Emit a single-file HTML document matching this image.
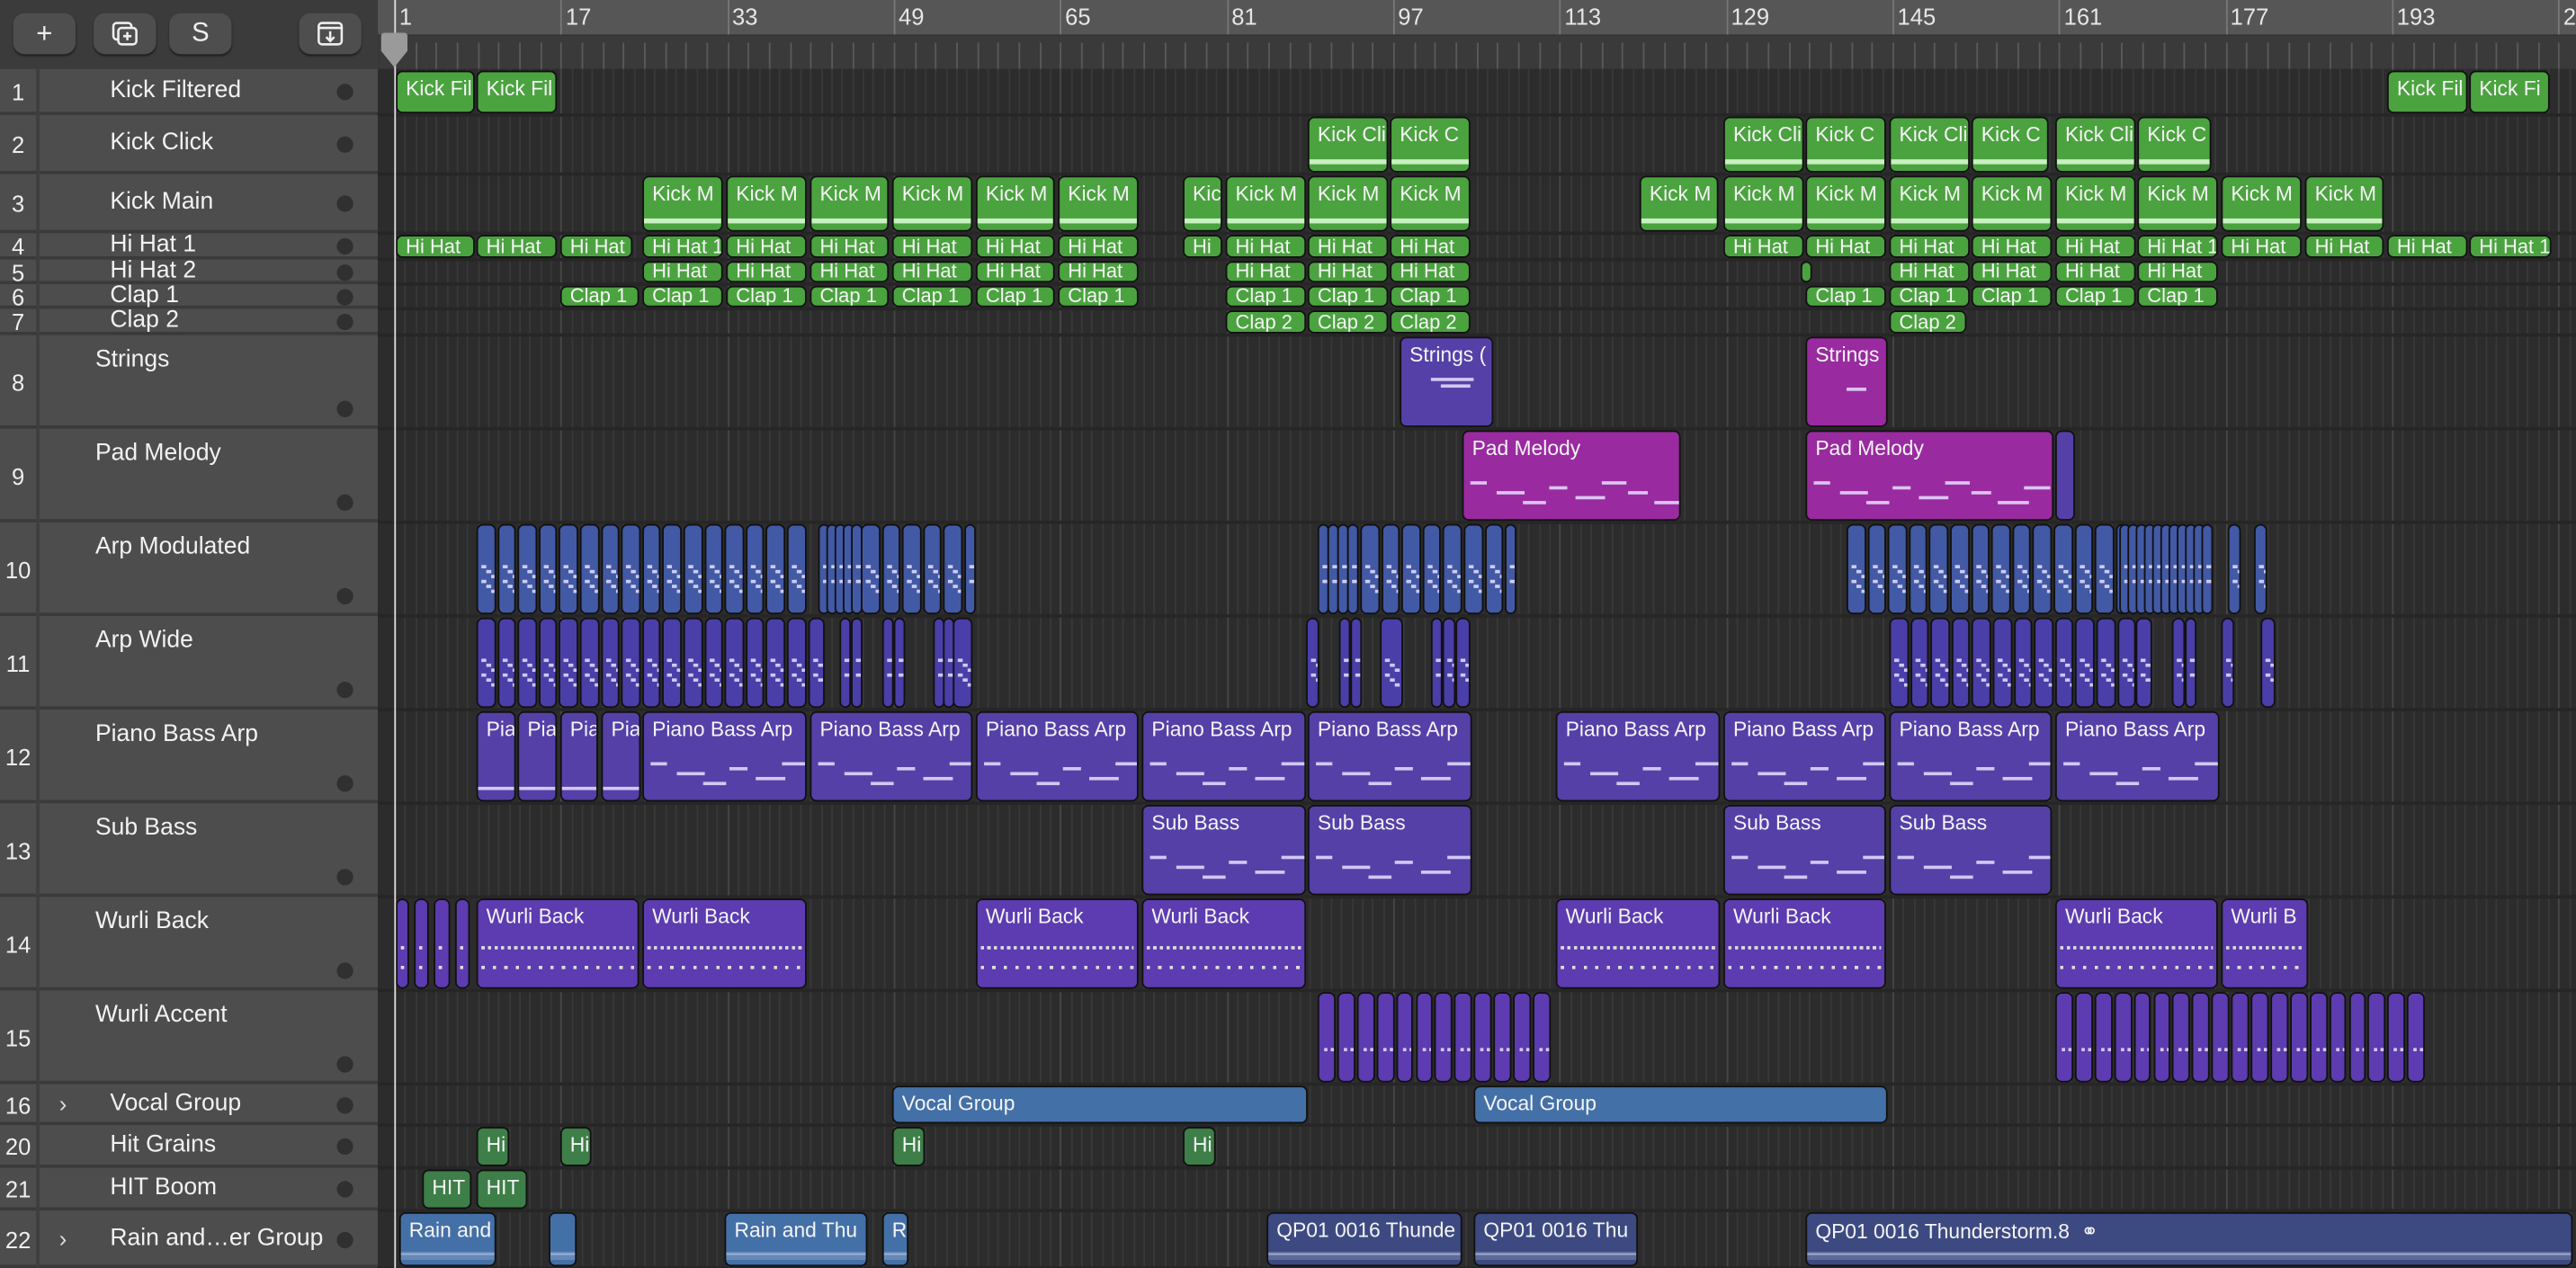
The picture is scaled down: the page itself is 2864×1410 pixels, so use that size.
<!DOCTYPE html>
<html><head><meta charset="utf-8">
<style>
html,body{margin:0;padding:0;background:#2b2b2b;overflow:hidden;width:2864px;height:1410px}
#app{position:absolute;left:0;top:0;width:1568px;height:772px;transform:scale(1.826531);transform-origin:0 0;font-family:"Liberation Sans",Arial,sans-serif;color:#fff;overflow:hidden}
#hdr{position:absolute;left:0;top:0;width:230px;height:42px;background:#3b3b3b;border-bottom:1px solid #2a2a2a}
.btn{position:absolute;top:8px;height:25px;width:38px;background:#4e4e4e;border-radius:7px;box-shadow:0 1px 1px #222;color:#eee;font-size:17px;text-align:center;line-height:25px}
#list{position:absolute;left:0;top:42px;width:230px;height:730px;background:#4d4d4d}
.row{position:absolute;left:0;width:230px;border-bottom:2px solid #3a3a3a;box-sizing:border-box}
.num{position:absolute;left:0;width:22px;text-align:center;font-size:14px;color:#eee}
.ncol{position:absolute;left:22px;top:0;bottom:0;width:2px;background:#3e3e3e}
.nm{position:absolute;font-size:14.5px;color:#f2f2f2;white-space:nowrap}
.dot{position:absolute;left:205px;width:10px;height:10px;border-radius:50%;background:#303030}
.exp{position:absolute;left:36px;font-size:14px;color:#ddd}
#ruler{position:absolute;left:230px;top:0;width:1338px;height:42px;background:#3a3a3a}
#r1{position:absolute;left:0;top:0;width:1338px;height:21px;background:#565656;border-bottom:1px solid #333}
.bn{position:absolute;top:2px;font-size:14px;color:#e6e6e6}
.bl{position:absolute;top:0;width:1px;height:21px;background:#777}
#arr{position:absolute;left:230px;top:42px;width:1338px;height:730px;background:#2c2c2c}
.hl{position:absolute;left:0;width:1338px;height:2px;background:#262626}
.vl{position:absolute;top:0;width:1px;height:730px;background:#3b3b3b}
.rg{position:absolute;box-sizing:border-box;border:1px solid #111;border-radius:4px;overflow:hidden;font-size:12.5px;white-space:nowrap;color:#f4f4f4;padding:3px 0 0 5px}
.g{background:#4ba33f}.dg{background:#3e7e48}.b1{background:#4259a5}.b2{background:#4a3ea8}.p{background:#5540a8}.m{background:#9a2aa0}.w{background:#5c3cb0}.v{background:#4470a8}.n{background:#3d4a82}
.ln{position:absolute;height:2px;background:rgba(230,225,255,.85)}
</style></head><body><div id="app">
<div id="hdr">
<div class="btn" style="left:8px">+</div>
<div class="btn" style="left:57px"><svg width="20" height="18" viewBox="0 0 20 18" style="margin-top:4px"><rect x="3" y="2" width="11" height="10" rx="2" fill="none" stroke="#eee" stroke-width="1.4"/><rect x="6" y="5" width="11" height="10" rx="2" fill="#4e4e4e" stroke="#eee" stroke-width="1.4"/><path d="M11.5 7.5v5M9 10h5" stroke="#eee" stroke-width="1.4"/></svg></div>
<div class="btn" style="left:103px;font-size:16px">S</div>
<div class="btn" style="left:182px"><svg width="18" height="18" viewBox="0 0 18 18" style="margin-top:4px"><rect x="2" y="2" width="14" height="13" rx="2" fill="none" stroke="#eee" stroke-width="1.4"/><path d="M2 5h14M9 7v6M6.5 10.5L9 13l2.5-2.5" fill="none" stroke="#eee" stroke-width="1.4"/></svg></div>
</div>
<div id="list"></div>
<div id="ruler"><div id="r1"></div></div>
<div id="arr"></div>
<div style="position:absolute;left:239.5px;top:0;width:1px;height:772px;background:#ddd"></div>
<svg style="position:absolute;left:231px;top:20px" width="18" height="22"><path d="M1 2Q1 0 3 0H15Q17 0 17 2V11L9 21L1 11Z" fill="#9a9a9a"/></svg>
</div>
<script>
(function(){
var L=document.getElementById('list'),A=document.getElementById('arr'),R=document.getElementById('ruler'),R1=document.getElementById('r1');
var rows=[[1,'Kick Filtered',42,70,0],[2,'Kick Click',70,106,0],[3,'Kick Main',106,142,0],[4,'Hi Hat 1',142,158,0],[5,'Hi Hat 2',158,173,0],[6,'Clap 1',173,188,0],[7,'Clap 2',188,204,0],[8,'Strings',204,261,1],[9,'Pad Melody',261,318,1],[10,'Arp Modulated',318,375,1],[11,'Arp Wide',375,432,1],[12,'Piano Bass Arp',432,489,1],[13,'Sub Bass',489,546,1],[14,'Wurli Back',546,603,1],[15,'Wurli Accent',603,660,1],[16,'Vocal Group',660,685,2],[20,'Hit Grains',685,711,0],[21,'HIT Boom',711,737,0],[22,'Rain and…er Group',737,772,2]];
var h='';var ah='';
rows.forEach(function(r){var t=r[2]-42,hh=r[3]-r[2],c=t+hh/2;
h+='<div class="row" style="top:'+t+'px;height:'+hh+'px"></div>';
if(r[4]==1){h+='<div class="num" style="top:'+(c-8)+'px">'+r[0]+'</div><div class="nm" style="left:58px;top:'+(t+7)+'px">'+r[1]+'</div><div class="dot" style="top:'+(t+hh-17)+'px"></div>';}
else{h+='<div class="num" style="top:'+(c-8)+'px">'+r[0]+'</div><div class="nm" style="left:67px;top:'+(c-9)+'px">'+r[1]+'</div><div class="dot" style="top:'+(c-5)+'px"></div>';
if(r[4]==2)h+='<div class="exp" style="top:'+(c-9)+'px">&#x203A;</div>';}
ah+='<div class="hl" style="top:'+(r[3]-43)+'px"></div>';});
h+='<div class="ncol"></div>';L.innerHTML=h;
var bw=6.333,x0=10;var vl='';
for(var b=0;b<212;b++){vl+='<div class="vl" style="left:'+(x0+b*bw)+'px;background:'+(b%16==0?'#474747':'#383838')+'"></div>';}
var rh='';for(var b=0;b<212;b+=2){rh+='<div style="position:absolute;left:'+(x0+b*bw)+'px;top:26px;width:1px;height:16px;background:#5a5a5a"></div>';}
var lb='';for(var n=1;n<=209;n+=16){var x=x0+(n-1)*bw;lb+='<div class="bl" style="left:'+x+'px"></div><div class="bn" style="left:'+(x+3)+'px">'+n+'</div>';}
R1.innerHTML=lb;R.insertAdjacentHTML('beforeend',rh);
function getRow(t){for(var i=0;i<rows.length;i++)if(rows[i][0]==t)return rows[i];}
var out='';
function rg(t,a,b,txt,cls,notes){var r=getRow(t);var y=r[2]-42+1,hh=r[3]-r[2]-2;
var s='<div class="rg '+cls+'" style="left:'+(a-230)+'px;top:'+y+'px;width:'+(b-a)+'px;height:'+hh+'px'+(hh<18?';font-size:12px;padding-top:0;line-height:'+(hh-2)+'px':'')+'">'+(txt||'');
if(notes)s+=notes(b-a,hh);s+='</div>';out+=s;}
function seq(t,list,txt,cls,notes){list.forEach(function(p){rg(t,p[0],p[1],p[2]!==undefined?p[2]:txt,cls,notes);});}
function split(a,b,w){var l=[];for(var x=a;x<b-1;x+=w)l.push([x,Math.min(x+w-1,b)]);return l;}
var kick=function(w,h){return '<div class="ln" style="left:0;right:0;top:'+(h-9)+'px;background:#c8f0c0;height:3px"></div>';};
var arp=function(w,h){var s='';for(var i=0;i<6;i++)s+='<div class="ln" style="left:'+(2+(i%3)*3)+'px;width:3px;top:'+(h/2-4+i*3)+'px"></div>';return s;};
var mel=function(w,h){var s='';for(var i=0;i<Math.max(2,w/18);i++)s+='<div class="ln" style="left:'+(4+i*16)+'px;width:'+(10+(i*7)%10)+'px;top:'+(h*0.55+((i*37)%5)*3)+'px"></div>';return s;};
var wur=function(w,h){var s='<div class="ln" style="left:2px;right:2px;top:'+(h*0.5)+'px;background:repeating-linear-gradient(90deg,#ddd 0 2px,transparent 2px 4px)"></div>';s+='<div class="ln" style="left:2px;right:2px;top:'+(h*0.72)+'px;background:repeating-linear-gradient(90deg,#ddd 0 2px,transparent 2px 7px)"></div>';return s;};
var pia=function(w,h){return '<div class="ln" style="left:0;right:0;top:'+(h-10)+'px"></div>';};
seq(1,[[241,289],[290,339],[1453,1502],[1503,1552,'Kick Fi']],'Kick Fil','g');
seq(2,[[796,845,'Kick Cli'],[846,895],[1049,1098,'Kick Cli'],[1099,1148],[1150,1199,'Kick Cli'],[1200,1247],[1251,1300,'Kick Cli'],[1301,1346]],'Kick C','g',kick);
seq(3,[[391,440],[442,491],[493,541],[543,592],[594,642],[644,693],[720,744,'Kic'],[746,795],[796,845],[846,895],[998,1046],[1049,1098],[1099,1148],[1150,1199],[1200,1249],[1251,1300],[1301,1350],[1352,1401],[1403,1451]],'Kick M','g',kick);
seq(4,[[241,289],[290,339],[341,385],[391,440,'Hi Hat 1'],[442,491],[493,541],[543,592],[594,642],[644,693],[720,744,'Hi'],[746,795],[796,845],[846,895],[1049,1098],[1099,1148],[1150,1199],[1200,1249],[1251,1300],[1301,1350,'Hi Hat 1'],[1352,1401],[1403,1451],[1453,1502],[1503,1553,'Hi Hat 1']],'Hi Hat','g');
seq(5,[[391,440],[442,491],[493,541],[543,592],[594,642],[644,693],[746,795],[796,845],[846,895],[1096,1103,''],[1150,1199],[1200,1249],[1251,1300],[1301,1350]],'Hi Hat','g');
seq(6,[[341,389],[391,440],[442,491],[493,541],[543,592],[594,642],[644,693],[746,795],[796,845],[846,895],[1099,1148],[1150,1199],[1200,1249],[1251,1300],[1301,1350]],'Clap 1','g');
seq(7,[[746,795],[796,845],[846,895],[1150,1197]],'Clap 2','g');
rg(8,852,909,'Strings (','p',function(w,h){return '<div class="ln" style="left:18px;width:26px;top:24px"></div><div class="ln" style="left:24px;width:18px;top:28px"></div>';});
rg(8,1099,1149,'Strings','m',function(){return '<div class="ln" style="left:24px;width:12px;top:30px"></div>';});
rg(9,890,1023,'Pad Melody','m',mel);rg(9,1099,1250,'Pad Melody','m',mel);rg(9,1251,1263,'','p');
seq(10,split(290,492,12.6).concat(split(498,520,5)).concat(split(524,593,12.6)).concat(split(802,826,6)).concat(split(828,921,12.6)).concat(split(1124,1290,12.6)).concat(split(1290,1345,5)).concat([[1356,1364],[1372,1380]]),'','b1',arp);
seq(11,split(290,502,12.6).concat([[511,518],[518,525],[537,544],[544,551],[568,574],[574,580],[580,592],[795,803],[815,822],[822,829],[840,854],[871,878],[878,886],[886,895]]).concat(split(1150,1300,12.6)).concat([[1300,1310],[1322,1330],[1330,1337],[1352,1360],[1376,1385]]),'','b2',arp);
seq(12,[[290,314],[315,339],[341,364],[366,390]],'Pia','p',pia);
seq(12,[[391,491],[493,592],[594,693],[695,795],[796,896],[947,1047],[1049,1148],[1150,1249],[1251,1351]],'Piano Bass Arp','p',mel);
seq(13,[[695,795],[796,896],[1049,1148],[1150,1249]],'Sub Bass','p',mel);
seq(14,[[241,249,''],[252,261,''],[264,274,''],[277,286,''],[290,389],[391,491],[594,693],[695,795],[947,1047],[1049,1148],[1251,1350],[1352,1405,'Wurli B']],'Wurli Back','w',wur);
seq(15,split(802,945,11.9).concat(split(1251,1478,11.9)),'','w',function(w,h){return '<div class="ln" style="left:3px;width:2px;top:'+(h*0.6)+'px"></div><div class="ln" style="left:7px;width:2px;top:'+(h*0.6)+'px"></div>';});
seq(16,[[543,796],[897,1149]],'Vocal Group','v');
seq(20,[[290,310],[341,360],[543,563],[720,740]],'Hi','dg');
seq(21,[[257,287],[290,321]],'HIT','dg');
var wave=function(w,h){return '<div style="position:absolute;left:0;right:0;bottom:3px;height:5px;background:rgba(255,255,255,.18)"></div><div class="ln" style="left:0;right:0;bottom:6px;height:1px;background:#9fb0d8"></div>';};
rg(22,243,302,'Rain and','v',wave);rg(22,334,351,'','v',wave);rg(22,441,528,'Rain and Thu','v',wave);rg(22,537,553,'R','v',wave);
rg(22,771,890,'QP01 0016 Thunde','n',wave);rg(22,897,997,'QP01 0016 Thu','n',wave);rg(22,1099,1566,'QP01 0016 Thunderstorm.8 &nbsp;&#x26AD;','n',wave);
A.innerHTML=vl+ah+out;
})();
</script>
</body></html>
